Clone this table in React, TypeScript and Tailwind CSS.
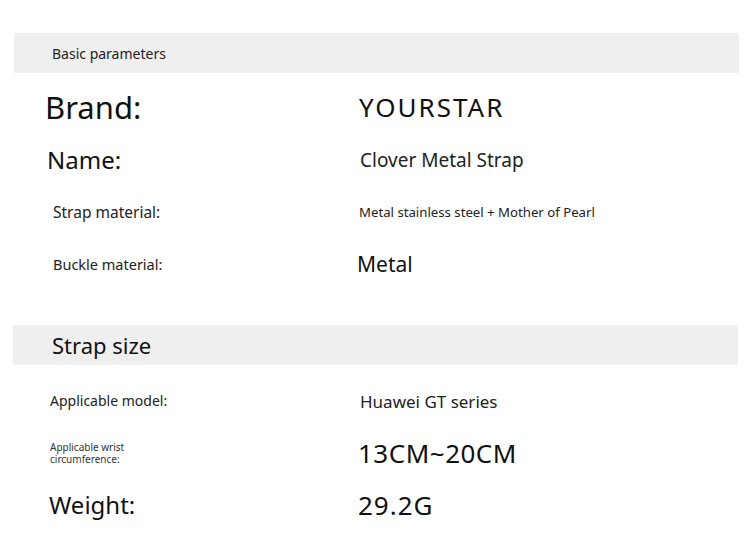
const font = { fontFamily: '"Noto Sans", "Noto Sans CJK SC", sans-serif' };

function Bar({ children, className }: { children: React.ReactNode; className: string }) {
	return (
		<div className={`flex h-10 w-[725px] items-center bg-[#efefef] ${className}`}>
			{children}
		</div>
	);
}

export default function App() {
	return (
		<div className="h-[545px] w-[750px] overflow-hidden bg-white pt-[33px] text-[#111]" style={font}>
			<Bar className="ml-[14px]">
				<span className="pl-[38px] text-[14px] text-[#222]">Basic parameters</span>
			</Bar>

			<div className="mt-[7px]">
				<div className="flex h-[54px] items-center">
					<span className="w-[359px] pl-[45px] text-[31px] leading-none">Brand:</span>
					<span className="text-[26px] leading-none tracking-[2px]">YOURSTAR</span>
				</div>
				<div className="flex h-[52px] items-center">
					<span className="w-[360px] pl-[47px] text-[24px] leading-none">Name:</span>
					<span className="text-[19px] leading-none text-[#222]">Clover Metal Strap</span>
				</div>
				<div className="flex h-[54px] items-center">
					<span className="w-[359px] pl-[53px] text-[15.5px] leading-none text-[#222]">Strap material:</span>
					<span className="text-[13.2px] leading-none text-[#222]">Metal stainless steel + Mother of Pearl</span>
				</div>
				<div className="flex h-[48px] items-center">
					<span className="w-[357px] pl-[53px] text-[14.5px] leading-none text-[#222]">Buckle material:</span>
					<span className="text-[21px] leading-none">Metal</span>
				</div>
			</div>

			<Bar className="ml-[13px] mt-[37px]">
				<span className="pl-[39px] text-[22px] text-[#111]">Strap size</span>
			</Bar>

			<div className="mt-[10px]">
				<div className="flex h-[52px] items-center">
					<span className="w-[360px] pl-[50px] text-[14px] leading-none text-[#222]">Applicable model:</span>
					<span className="text-[17px] leading-none text-[#222]">Huawei GT series</span>
				</div>
				<div className="flex h-[52px] items-center">
					<div className="w-[358px] pl-[50px] text-[10px] leading-[12px] text-[#333]">
						<div>Applicable wrist</div>
						<div>circumference:</div>
					</div>
					<span className="text-[26px] leading-none tracking-[0.5px]">13CM~20CM</span>
				</div>
				<div className="flex h-[52px] items-center">
					<span className="w-[358px] pl-[49px] text-[24px] leading-none">Weight:</span>
					<span className="text-[26px] leading-none tracking-[1px]">29.2G</span>
				</div>
			</div>
		</div>
	);
}
